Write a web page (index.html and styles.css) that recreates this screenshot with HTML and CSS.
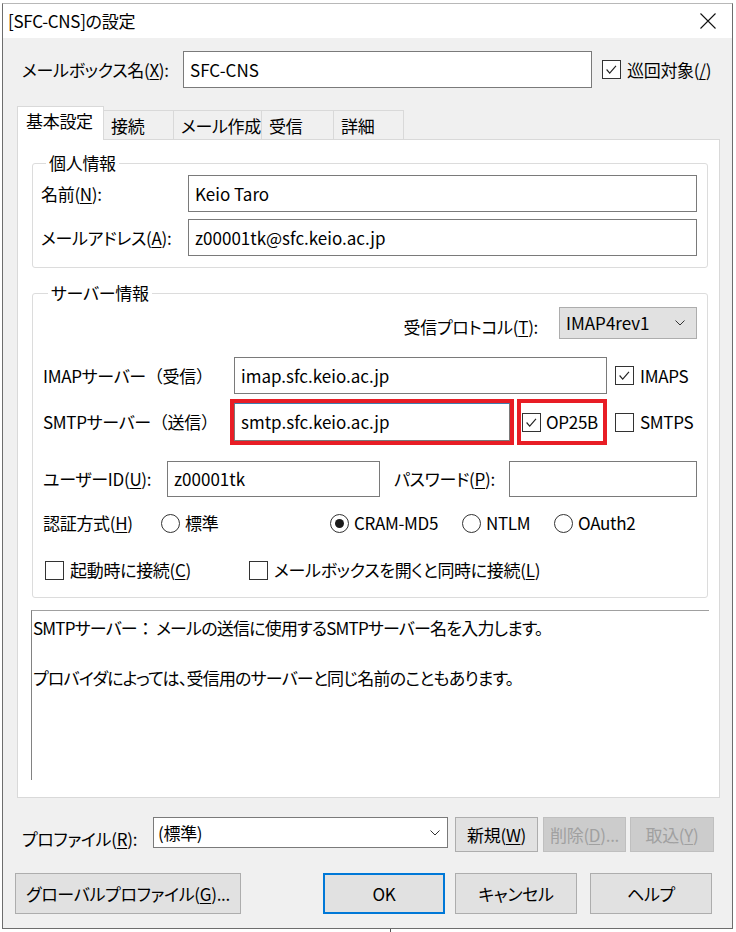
FILE: index.html
```html
<!DOCTYPE html>
<html lang="ja">
<head>
    <meta charset="UTF-8">
    <title>[SFC-CNS]の設定</title>
    <link rel="stylesheet" href="styles.css">
</head>
<body>
    <div class="window">
        <div class="titlebar">
            <span class="title">[SFC-CNS]の設定</span>
            <svg class="close" width="16" height="16" viewBox="0 0 16 16">
                <path d="M0.5 0.5 L15.5 15.5 M15.5 0.5 L0.5 15.5" stroke="#111" stroke-width="1.1" fill="none"/>
            </svg>
        </div>

        <div class="dialog">
            <div class="mailbox-row">
                <span class="mailbox-label">メールボックス名(<u>X</u>):</span>
                <div class="field mailbox-field">SFC-CNS</div>
                <span class="check mailbox-check">
                    <span class="box"><svg viewBox="0 0 19 19"><polyline points="4,9.5 7.5,13.5 14.5,5.5"/></svg></span>
                    <span>巡回対象(<u>/</u>)</span>
                </span>
            </div>

            <div class="tabs">
                <div class="tab active t1">基本設定</div>
                <div class="tab t2">接続</div>
                <div class="tab t3">メール作成</div>
                <div class="tab t4">受信</div>
                <div class="tab t5">詳細</div>
            </div>

            <div class="panel">
                <fieldset class="group personal">
                    <legend>個人情報</legend>
                    <div class="frow">
                        <span>名前(<u>N</u>):</span>
                        <div class="field">Keio Taro</div>
                    </div>
                    <div class="frow second">
                        <span>メールアドレス(<u>A</u>):</span>
                        <div class="field">z00001tk@sfc.keio.ac.jp</div>
                    </div>
                </fieldset>

                <fieldset class="group server">
                    <legend>サーバー情報</legend>
                    <div class="proto-row">
                        <span class="proto-label">受信プロトコル(<u>T</u>):</span>
                        <div class="combo proto">
                            IMAP4rev1
                            <svg class="chev" viewBox="0 0 10 6"><polyline points="0.5,0.5 5,5 9.5,0.5"/></svg>
                        </div>
                    </div>

                    <div class="srow imap-row">
                        <span class="slabel">IMAPサーバー<span class="wide">（受信）</span></span>
                        <div class="field imap-field">imap.sfc.keio.ac.jp</div>
                        <span class="check side-check">
                            <span class="box"><svg viewBox="0 0 19 19"><polyline points="4,9.5 7.5,13.5 14.5,5.5"/></svg></span>
                            <span>IMAPS</span>
                        </span>
                    </div>

                    <div class="srow smtp-row">
                        <span class="slabel">SMTPサーバー<span class="wide">（送信）</span></span>
                        <div class="mark mark-field">
                            <div class="field smtp-field">smtp.sfc.keio.ac.jp</div>
                        </div>
                        <div class="mark mark-check">
                            <span class="check">
                                <span class="box"><svg viewBox="0 0 19 19"><polyline points="4,9.5 7.5,13.5 14.5,5.5"/></svg></span>
                                <span>OP25B</span>
                            </span>
                        </div>
                        <span class="check side-check smtps">
                            <span class="box"></span>
                            <span>SMTPS</span>
                        </span>
                    </div>

                    <div class="srow user-row">
                        <span class="ulabel">ユーザーID(<u>U</u>):</span>
                        <div class="field user-field">z00001tk</div>
                        <span class="plabel">パスワード(<u>P</u>):</span>
                        <div class="field pass-field"></div>
                    </div>

                    <div class="auth-row">
                        <span class="alabel">認証方式(<u>H</u>)</span>
                        <span class="radio r1"><span class="dot"></span><span>標準</span></span>
                        <span class="radio r2"><span class="dot on"></span><span>CRAM-MD5</span></span>
                        <span class="radio r3"><span class="dot"></span><span>NTLM</span></span>
                        <span class="radio r4"><span class="dot"></span><span>OAuth2</span></span>
                    </div>

                    <div class="connect-row">
                        <span class="check c1"><span class="box"></span><span>起動時に接続(<u>C</u>)</span></span>
                        <span class="check"><span class="box"></span><span>メールボックスを開くと同時に接続(<u>L</u>)</span></span>
                    </div>
                </fieldset>

                <div class="desc">
                    <p>SMTPサーバー<span class="wide">：</span> メールの送信に使用するSMTPサーバー名を入力します。</p>
                    <p>&nbsp;</p>
                    <p>プロバイダによっては、受信用のサーバーと同じ名前のこともあります。</p>
                </div>
            </div>

            <div class="profile-row">
                <span class="profile-label">プロファイル(<u>R</u>):</span>
                <div class="combo profile">
                    (標準)
                    <svg class="chev" viewBox="0 0 10 6"><polyline points="0.5,0.5 5,5 9.5,0.5"/></svg>
                </div>
                <button class="btn small new">新規(<u>W</u>)</button>
                <button class="btn small off del" disabled>削除(<u>D</u>)...</button>
                <button class="btn small off imp" disabled>取込(<u>Y</u>)</button>
            </div>

            <div class="button-row">
                <button class="btn global">グローバルプロファイル(<u>G</u>)...</button>
                <button class="btn ok">OK</button>
                <button class="btn cancel">キャンセル</button>
                <button class="btn help">ヘルプ</button>
            </div>
        </div>
    </div>
    <div class="behind"></div>
</body>
</html>
```

FILE: styles.css
```css
* {
    box-sizing: border-box;
    margin: 0;
    padding: 0;
}

html, body {
    background: #fff;
}

body {
    font-family: "Noto Sans CJK JP", sans-serif;
    font-size: 17px;
    font-feature-settings: "palt";
    letter-spacing: -0.3px;
    color: #000;
    line-height: 24px;
}

u {
    text-underline-offset: 2px;
    text-decoration-thickness: 1px;
}

.wide {
    font-feature-settings: normal;
}

.window {
    width: 731px;
    height: 926px;
    margin: 3px 0 0 2px;
    border: 1px solid #6d6d6d;
    border-top-color: #b8b8b8;
    background: #f0f0f0;
    display: flex;
    flex-direction: column;
}

/* 背後のウィンドウの縁 */
.behind {
    width: 1px;
    height: 3px;
    margin-left: 390px;
    background: #555;
}

/* タイトルバー */
.titlebar {
    height: 34px;
    background: #fff;
    display: flex;
    align-items: center;
    justify-content: space-between;
    padding: 0 16px 0 5px;
    flex-shrink: 0;
}

.close {
    display: block;
}

.dialog {
    flex: 1;
    padding-top: 13px;
}

/* 共通パーツ */
.field {
    height: 37px;
    background: #fff;
    border: 1px solid #7a7a7a;
    padding-left: 6px;
    display: flex;
    align-items: center;
    white-space: nowrap;
    letter-spacing: 0;
}

.check {
    display: inline-flex;
    align-items: center;
    gap: 6px;
    white-space: nowrap;
}

.box {
    width: 19px;
    height: 19px;
    border: 1px solid #333;
    background: #fff;
    flex-shrink: 0;
    display: block;
}

.box svg {
    display: block;
    width: 17px;
    height: 17px;
    fill: none;
    stroke: #222;
    stroke-width: 1.3;
}

.radio {
    display: inline-flex;
    align-items: center;
    gap: 5px;
    white-space: nowrap;
}

.dot {
    width: 19px;
    height: 19px;
    border: 1px solid #333;
    border-radius: 50%;
    background: #fff;
    display: flex;
    align-items: center;
    justify-content: center;
    flex-shrink: 0;
}

.dot.on::after {
    content: "";
    width: 9px;
    height: 9px;
    border-radius: 50%;
    background: #1a1a1a;
}

.combo {
    display: flex;
    align-items: center;
    justify-content: space-between;
    white-space: nowrap;
}

.chev {
    width: 10px;
    height: 6px;
    fill: none;
    stroke: #333;
    stroke-width: 1;
}

.btn {
    font-family: inherit;
    font-size: 17px;
    font-feature-settings: "palt";
    letter-spacing: -0.3px;
    color: #000;
    background: #e1e1e1;
    border: 1px solid #adadad;
    display: flex;
    align-items: center;
    justify-content: center;
    white-space: nowrap;
}

.btn.off {
    background: #cccccc;
    border-color: #bfbfbf;
    color: #a0a0a0;
}

/* メールボックス名 */
.mailbox-row {
    display: flex;
    align-items: center;
    height: 37px;
}

.mailbox-label {
    width: 161px;
    margin-left: 19px;
    white-space: nowrap;
}

.mailbox-field {
    width: 409px;
}

.mailbox-check {
    margin-left: 10px;
}

/* タブ */
.tabs {
    display: flex;
    align-items: flex-end;
    height: 33px;
    margin: 18px 0 0 14px;
    position: relative;
    z-index: 1;
}

.tab {
    height: 29px;
    border: 1px solid #d9d9d9;
    border-left: none;
    border-bottom: none;
    background: #f0f0f0;
    padding: 3px 0 0 7px;
    white-space: nowrap;
    overflow: hidden;
}

.tab.active {
    height: 34px;
    margin-bottom: -1px;
    border-left: 1px solid #d9d9d9;
    background: #fff;
    padding: 2px 0 0 8px;
}

.t1 { width: 87px; }
.t2 { width: 70px; }
.t3 { width: 88px; }
.t4 { width: 72px; }
.t5 { width: 70px; }

.panel {
    width: 703px;
    height: 659px;
    margin-left: 14px;
    border: 1px solid #d9d9d9;
    background: #fff;
    padding: 13px 11px 0 14px;
}

/* グループ枠 */
.group {
    border: 1px solid #dcdcdc;
    border-radius: 3px;
    padding: 0 10px 11px 8px;
}

.group legend {
    line-height: 20px;
    padding: 0 3px;
    margin-left: 5px;
}

.frow {
    display: grid;
    grid-template-columns: 147px 1fr;
    align-items: center;
    height: 37px;
    margin-top: 2px;
    white-space: nowrap;
}

.frow.second {
    margin-top: 7px;
}

.server {
    margin-top: 15px;
    padding: 0 10px 17px 10px;
}

.proto-row {
    display: flex;
    justify-content: flex-end;
    align-items: flex-start;
    gap: 21px;
    height: 32px;
    margin-top: 4px;
}

.proto-label {
    padding-top: 8px;
}

.proto {
    width: 138px;
    height: 32px;
    background: #e1e1e1;
    border: 1px solid #adadad;
    padding: 0 11px 0 6px;
    letter-spacing: 0;
}

.srow {
    display: flex;
    align-items: center;
    white-space: nowrap;
}

.slabel {
    width: 191px;
}

.imap-row {
    height: 37px;
    margin-top: 18px;
}

.imap-field {
    width: 373px;
}

.side-check {
    margin-left: 8px;
}

.smtp-row {
    height: 46px;
    margin-top: 5px;
}

.mark {
    border: 4px solid #e81d25;
    height: 46px;
}

.mark-field {
    width: 284px;
    margin-left: -4px;
}

.smtp-field {
    height: 38px;
    border-top-color: #3c7fb1;
}

.mark-check {
    width: 90px;
    margin-left: 3px;
    padding-left: 1px;
    display: flex;
    align-items: center;
}

.mark-check .check {
    gap: 5px;
}

.smtps {
    margin-left: 8px;
}

.user-row {
    height: 36px;
    margin-top: 16px;
}

.ulabel {
    width: 124px;
}

.user-field {
    width: 213px;
    height: 36px;
}

.plabel {
    width: 115px;
    margin-left: 14px;
}

.pass-field {
    flex: 1;
    height: 36px;
}

.auth-row {
    display: flex;
    align-items: center;
    height: 20px;
    margin-top: 16px;
    white-space: nowrap;
}

.alabel {
    width: 118px;
}

.r1 { width: 169px; }
.r2 { width: 132px; }
.r3 { width: 92px; }

.connect-row {
    display: flex;
    align-items: center;
    height: 20px;
    margin: 27px 0 0 2px;
}

.c1 {
    width: 204px;
}

/* 説明欄 */
.desc {
    width: 678px;
    height: 170px;
    margin: 12px 0 0 -1px;
    border-top: 1px solid #a0a0a0;
    border-left: 1px solid #828282;
    padding: 4px 0 0 1px;
    line-height: 25px;
    white-space: nowrap;
    letter-spacing: -0.8px;
}

/* プロファイル */
.profile-row {
    display: flex;
    align-items: flex-start;
    height: 35px;
    margin-top: 19px;
}

.profile-label {
    width: 131px;
    margin-left: 19px;
    padding-top: 10px;
    white-space: nowrap;
}

.profile {
    width: 295px;
    height: 31px;
    background: #fff;
    border: 1px solid #7a7a7a;
    padding: 0 7px 0 4px;
}

.small {
    width: 83px;
    height: 35px;
}

.new { margin-left: 7px; }
.del { margin-left: 5px; }
.imp { margin-left: 4px; width: 84px; }

.button-row {
    display: flex;
    height: 41px;
    margin-top: 21px;
}

.button-row .btn {
    height: 41px;
    width: 122px;
}

.global {
    margin-left: 12px;
    width: 226px !important;
}

.ok {
    margin-left: 82px;
    border: 2px solid #0078d7 !important;
}

.cancel { margin-left: 10px; }
.help { margin-left: 13px; }
```
